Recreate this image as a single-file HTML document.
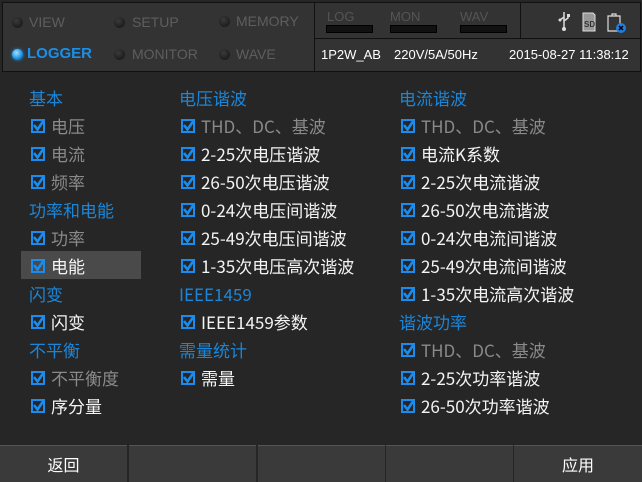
<!DOCTYPE html>
<html><head><meta charset="utf-8"><style>
*{margin:0;padding:0;box-sizing:border-box}
body{width:642px;height:482px;background:#262626;position:relative;overflow:hidden;font-family:"Liberation Sans","Noto Sans CJK SC",sans-serif}
.abs{position:absolute}
.panel{background:#333;border:1px solid #111}
.led{position:absolute;width:11px;height:11px;border-radius:50%;background:radial-gradient(circle at 40% 35%,#3a3a3a,#111);}
.ml{position:absolute;font-size:14px;color:#5e5e5e}
.t{position:absolute;font-size:17px;white-space:nowrap;line-height:20px;font-family:"Noto Sans CJK SC","Liberation Sans",sans-serif}
.h{color:#1b86d8}
.g{color:#8a8a8a}
.w{color:#f4f4f4}
.cb{position:absolute;width:14px;height:14px;border:2px solid #1a8cf0}
.cb svg{position:absolute;left:-1px;top:-2px}
.bar{position:absolute;height:8px;width:47px;background:#111;border:1px solid #000}
.btn{position:absolute;top:445px;height:37px;width:127px;background:#3a3a3a;border-top:1px solid #555;color:#fff;font-size:16px;text-align:center;line-height:36px;font-family:"Noto Sans CJK SC",sans-serif}
</style></head><body>
<div class="abs panel" style="left:2px;top:2px;width:313px;height:70px"></div>
<div class="abs panel" style="left:314px;top:2px;width:327px;height:70px"></div>
<div class="abs" style="left:314px;top:38px;width:327px;height:1px;background:#111"></div>
<div class="abs" style="left:520px;top:2px;width:1px;height:37px;background:#111"></div>

<div class="led" style="left:12px;top:17px"></div><div class="ml" style="left:29px;top:14px">VIEW</div>
<div class="led" style="left:114px;top:17px"></div><div class="ml" style="left:132px;top:14px">SETUP</div>
<div class="led" style="left:219px;top:16px"></div><div class="ml" style="left:236px;top:13px">MEMORY</div>
<div class="led" style="left:12px;top:49px;background:radial-gradient(circle at 40% 35%,#9fe0ff,#1a8fe0 60%,#0a4f86);box-shadow:0 0 3px #1a8fe0"></div>
<div class="ml" style="left:27px;top:45px;color:#1a8fe8;font-weight:bold;font-size:15px">LOGGER</div>
<div class="led" style="left:114px;top:49px"></div><div class="ml" style="left:132px;top:46px">MONITOR</div>
<div class="led" style="left:219px;top:49px"></div><div class="ml" style="left:236px;top:46px">WAVE</div>

<div class="ml" style="left:327px;top:9px;font-size:13px;color:#555">LOG</div>
<div class="ml" style="left:390px;top:9px;font-size:13px;color:#555">MON</div>
<div class="ml" style="left:460px;top:9px;font-size:13px;color:#555">WAV</div>
<div class="bar" style="left:326px;top:25px"></div>
<div class="bar" style="left:390px;top:25px"></div>
<div class="bar" style="left:460px;top:25px"></div>

<svg class="abs" style="left:557px;top:11px" width="80" height="22">
<g fill="none" stroke="#ddd" stroke-width="1.5"><path d="M7 1V18M7 6L3 9M7 10L11 7V4"/></g>
<circle cx="7" cy="18" r="2" fill="#ddd"/><circle cx="3" cy="9" r="1.5" fill="#ddd"/><rect x="10" y="3" width="3" height="3" fill="#ddd"/>
<path d="M26 2H36L38 4V20H26Z" fill="#999" stroke="#ddd"/><text x="27" y="16" font-size="8" fill="#333" font-family="Liberation Sans" font-weight="bold">SD</text>
<path d="M51 5H63V20H51Z M55 5V3H59V5" fill="none" stroke="#ddd" stroke-width="1.2"/>
<circle cx="64" cy="17" r="5" fill="#1f7fe0"/><path d="M62 15L66 19M66 15L62 19" stroke="#000" stroke-width="1.5"/>
</svg>

<div class="abs" style="left:321px;top:47px;font-size:13px;color:#fff">1P2W_AB</div>
<div class="abs" style="left:394px;top:47px;font-size:13px;color:#fff">220V/5A/50Hz</div>
<div class="abs" style="left:509px;top:47px;font-size:13px;color:#fff">2015-08-27 11:38:12</div>

<div class="abs" style="left:21px;top:251px;width:120px;height:28px;background:#4a4a4a"></div>

<div id="c"></div>
<script>
var rows=[
[28,98,'h','基本'],[28,126,'g','电压',1],[28,154,'g','电流',1],[28,182,'g','频率',1],[28,210,'h','功率和电能'],[28,238,'g','功率',1],[28,266,'w','电能',1],[28,294,'h','闪变'],[28,322,'w','闪变',1],[28,350,'h','不平衡'],[28,378,'g','不平衡度',1],[28,406,'w','序分量',1],
[178,98,'h','电压谐波'],[178,126,'g','THD、DC、基波',1],[178,154,'w','2-25次电压谐波',1],[178,182,'w','26-50次电压谐波',1],[178,210,'w','0-24次电压间谐波',1],[178,238,'w','25-49次电压间谐波',1],[178,266,'w','1-35次电压高次谐波',1],[178,294,'h','IEEE1459'],[178,322,'w','IEEE1459参数',1],[178,350,'h','需量统计'],[178,378,'w','需量',1],
[398,98,'h','电流谐波'],[398,126,'g','THD、DC、基波',1],[398,154,'w','电流K系数',1],[398,182,'w','2-25次电流谐波',1],[398,210,'w','26-50次电流谐波',1],[398,238,'w','0-24次电流间谐波',1],[398,266,'w','25-49次电流间谐波',1],[398,294,'w','1-35次电流高次谐波',1],[398,322,'h','谐波功率'],[398,350,'g','THD、DC、基波',1],[398,378,'w','2-25次功率谐波',1],[398,406,'w','26-50次功率谐波',1]];
var h='';
rows.forEach(function(r){
 if(r[4]){
  h+='<div class="cb" style="left:'+(r[0]+3)+'px;top:'+(r[1]-7)+'px"><svg width="14" height="14"><path d="M2 6L5.5 10.5L12 1" fill="none" stroke="#1a8cf0" stroke-width="2.6"/></svg></div>';
  h+='<div class="t '+r[2]+'" style="left:'+(r[0]+23)+'px;top:'+(r[1]-10)+'px">'+r[3]+'</div>';
 } else h+='<div class="t h" style="left:'+(r[0]+1)+'px;top:'+(r[1]-10)+'px">'+r[3]+'</div>';
});
document.getElementById('c').innerHTML=h;
</script>

<div class="btn" style="left:0">返回</div>
<div class="btn" style="left:129px"></div>
<div class="btn" style="left:258px"></div>
<div class="btn" style="left:386px"></div>
<div class="btn" style="left:514px;width:128px">应用</div>
</body></html>
